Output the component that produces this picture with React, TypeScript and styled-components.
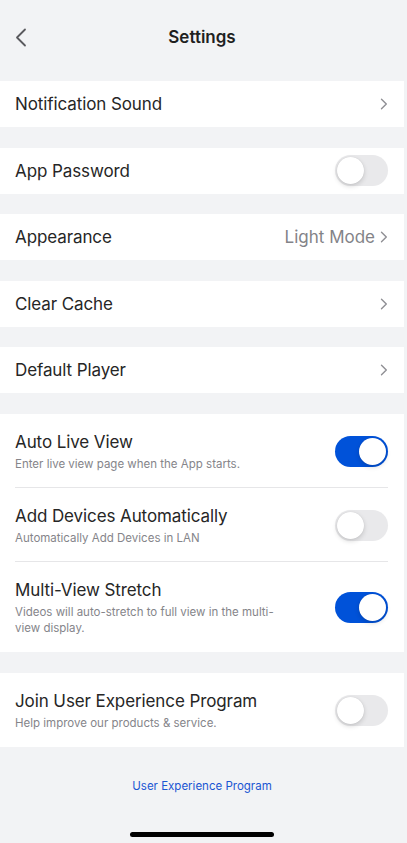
import React, {useState} from "react";
import styled, {createGlobalStyle} from "styled-components";

const GlobalStyle = createGlobalStyle`
  html, body {
    margin: 0;
    padding: 0;
    background: #f2f3f5;
  }
  body {
    font-family: Inter, "Noto Sans", "Liberation Sans", sans-serif;
    -webkit-font-smoothing: antialiased;
  }
  * {
    box-sizing: border-box;
  }
`;

const Page = styled.div`
  width: 404px;
  min-height: 843px;
  background: #f2f3f5;
  display: flex;
  flex-direction: column;
`;

const NavBar = styled.header`
  height: 81px;
  display: flex;
  align-items: center;
  padding: 0 15px 7px;
  position: relative;
`;

const BackButton = styled.button`
  border: none;
  background: none;
  padding: 0;
  width: 14px;
  height: 20px;
  display: flex;
  align-items: center;
  cursor: pointer;
`;

const Title = styled.h1`
  position: absolute;
  left: 0;
  right: 0;
  top: 26px;
  margin: 0;
  text-align: center;
  font-size: 17px;
  line-height: 22px;
  font-weight: 600;
  color: #1f1f1f;
  pointer-events: none;
`;

const Groups = styled.div`
  display: flex;
  flex-direction: column;
  gap: 20.6px;
`;

const Card = styled.section`
  background: #fff;
`;

const Row = styled.div<{$tall?: boolean; $divider?: boolean}>`
  display: flex;
  align-items: center;
  padding: ${p => (p.$tall ? "17px 16px 16px 15px" : "0 16px 0 15px")};
  min-height: ${p => (p.$tall ? "auto" : "46px")};
  position: relative;
  ${p =>
    p.$divider &&
    `
    &::after {
      content: "";
      position: absolute;
      left: 15px;
      right: 16px;
      bottom: 0;
      height: 1px;
      background: #e6e6e8;
    }
  `}
`;

const TextBlock = styled.div`
  flex: 1;
  min-width: 0;
`;

const Label = styled.div`
  font-size: 17px;
  line-height: 22px;
  color: #262626;
  letter-spacing: -0.1px;
`;

const Hint = styled.div`
  margin-top: 3px;
  max-width: 272px;
  font-size: 11.5px;
  line-height: 16px;
  color: #85858a;
`;

const Value = styled.span`
  font-size: 17px;
  color: #838388;
  margin-right: 5px;
`;

const Track = styled.button<{$on: boolean}>`
  width: 53px;
  height: 31px;
  border-radius: 16px;
  border: none;
  padding: 0;
  flex-shrink: 0;
  position: relative;
  cursor: pointer;
  background: ${p => (p.$on ? "#0052d9" : "#e9e9eb")};
  transition: background 0.2s ease;
`;

const Knob = styled.span<{$on: boolean}>`
  position: absolute;
  top: 2px;
  left: ${p => (p.$on ? "24px" : "2px")};
  width: 27px;
  height: 27px;
  border-radius: 50%;
  background: #fff;
  box-shadow: 0 2px 5px rgba(0, 0, 0, 0.16), 0 0 1px rgba(0, 0, 0, 0.12);
  transition: left 0.2s ease;
`;

const Footer = styled.div`
  display: flex;
  justify-content: center;
  padding-top: 31px;
`;

const FooterLink = styled.a`
  font-size: 11.5px;
  line-height: 16px;
  color: #1a56d3;
  text-decoration: none;
`;

const HomeIndicator = styled.div`
  width: 144px;
  height: 5px;
  border-radius: 3px;
  background: #000;
  margin: 38px auto 0;
`;

function Chevron() {
    return (
        <svg width="8" height="12" viewBox="0 0 8 12" fill="none">
            <path d="M1.5 1.2L6.3 6L1.5 10.8" stroke="#8f8f94" strokeWidth="1.4" strokeLinecap="round" strokeLinejoin="round"/>
        </svg>
    );
}

function Toggle({on, onChange}: {on: boolean; onChange: () => void}) {
    return (
        <Track type="button" $on={on} onClick={onChange}>
            <Knob $on={on}/>
        </Track>
    );
}

interface SwitchItem {
    key: string;
    label: string;
    hint: string;
}

const liveOptions: SwitchItem[] = [
    {key: "autoLive", label: "Auto Live View", hint: "Enter live view page when the App starts."},
    {key: "autoAdd", label: "Add Devices Automatically", hint: "Automatically Add Devices in LAN"},
    {key: "stretch", label: "Multi-View Stretch", hint: "Videos will auto-stretch to full view in the multi-view display."},
];

function App() {
    const [flags, setFlags] = useState<Record<string, boolean>>({
        password: false,
        autoLive: true,
        autoAdd: false,
        stretch: true,
        uxProgram: false,
    });

    const flip = (key: string) => setFlags(prev => ({...prev, [key]: !prev[key]}));

    return (
        <Page>
            <GlobalStyle/>
            <NavBar>
                <BackButton type="button" aria-label="Back">
                    <svg width="12" height="19" viewBox="0 0 12 19" fill="none">
                        <path d="M10 1.5L2 9.5L10 17.5" stroke="#5a5a5e" strokeWidth="1.8" strokeLinecap="round" strokeLinejoin="round"/>
                    </svg>
                </BackButton>
                <Title>Settings</Title>
            </NavBar>

            <Groups>
                <Card>
                    <Row>
                        <TextBlock><Label>Notification Sound</Label></TextBlock>
                        <Chevron/>
                    </Row>
                </Card>
                <Card>
                    <Row>
                        <TextBlock><Label>App Password</Label></TextBlock>
                        <Toggle on={flags.password} onChange={() => flip("password")}/>
                    </Row>
                </Card>
                <Card>
                    <Row>
                        <TextBlock><Label>Appearance</Label></TextBlock>
                        <Value>Light Mode</Value>
                        <Chevron/>
                    </Row>
                </Card>
                <Card>
                    <Row>
                        <TextBlock><Label>Clear Cache</Label></TextBlock>
                        <Chevron/>
                    </Row>
                </Card>
                <Card>
                    <Row>
                        <TextBlock><Label>Default Player</Label></TextBlock>
                        <Chevron/>
                    </Row>
                </Card>
                <Card>
                    {liveOptions.map((opt, i) => (
                        <Row key={opt.key} $tall $divider={i < liveOptions.length - 1}>
                            <TextBlock>
                                <Label>{opt.label}</Label>
                                <Hint>{opt.hint}</Hint>
                            </TextBlock>
                            <Toggle on={flags[opt.key]} onChange={() => flip(opt.key)}/>
                        </Row>
                    ))}
                </Card>
                <Card>
                    <Row $tall>
                        <TextBlock>
                            <Label>Join User Experience Program</Label>
                            <Hint>Help improve our products &amp; service.</Hint>
                        </TextBlock>
                        <Toggle on={flags.uxProgram} onChange={() => flip("uxProgram")}/>
                    </Row>
                </Card>
            </Groups>

            <Footer>
                <FooterLink href="#">User Experience Program</FooterLink>
            </Footer>
            <HomeIndicator/>
        </Page>
    );
}

export default App;
